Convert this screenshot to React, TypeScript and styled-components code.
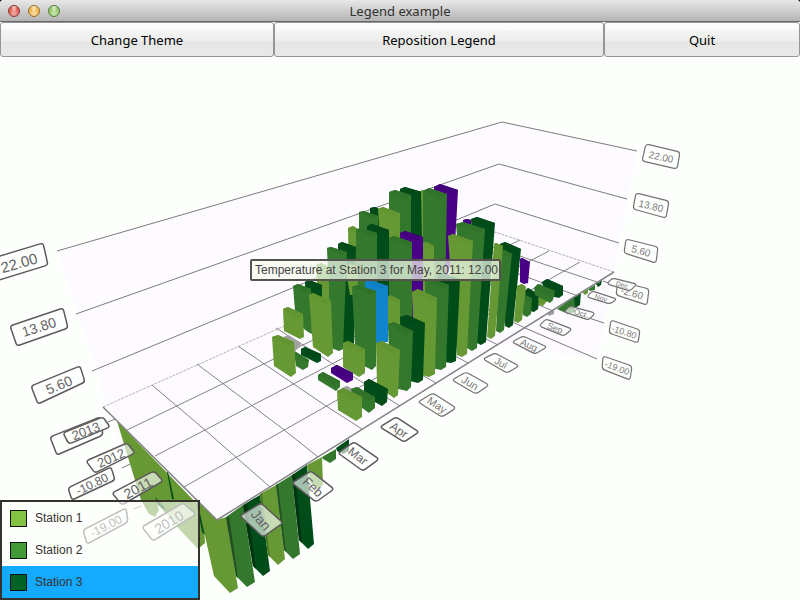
import React from "react";
import styled, { createGlobalStyle } from "styled-components";

const GlobalStyle = createGlobalStyle`
  * { box-sizing: border-box; }
  body {
    margin: 0;
    background: #fcfffc;
    font-family: "Noto Sans", "Open Sans", sans-serif;
  }
`;

const Window = styled.div`
  display: flex;
  flex-direction: column;
  min-height: 100vh;
  background: #fcfffc;
`;

const TitleBar = styled.header`
  display: grid;
  grid-template-columns: 1fr auto 1fr;
  align-items: center;
  height: 22px;
  padding: 0 8px;
  background: linear-gradient(#e8e8e8, #b4b4b4);
  border-bottom: 1px solid #686868;
  border-radius: 4px 4px 0 0;
  box-shadow: 0 -4px 0 4px #222;
  clip-path: inset(0);
`;

const Title = styled.h1`
  margin: 0;
  font-size: 13px;
  line-height: 20px;
  font-weight: 400;
  color: #303030;
`;

const Lights = styled.div`
  display: flex;
  gap: 8px;
`;

const Light = styled.button<{ $core: string; $rim: string }>`
  width: 12px;
  height: 12px;
  padding: 0;
  border: 1px solid ${(p) => p.$rim};
  border-radius: 50%;
  background: radial-gradient(ellipse at 50% 10%, #ffffffcc 0, #ffffff00 45%),
    radial-gradient(circle at 50% 75%, #ffffff88, #ffffff00 60%), ${(p) => p.$core};
`;

const Toolbar = styled.nav`
  display: grid;
  grid-template-columns: 274fr 330fr 196fr;
  height: 35px;
`;

const ToolButton = styled.button`
  padding: 0;
  border: 1px solid #959595;
  border-radius: 3px;
  background: linear-gradient(#fffdff 0, #faf8fc 22%, #f3f5f1 24%, #ededed 55%, #e5e7e4 58%, #e9e9e9 100%);
  font-family: "Noto Sans", "Open Sans", sans-serif;
  font-size: 13px;
  line-height: 18px;
  color: #000;
`;

const ChartArea = styled.main`
  position: relative;
  display: flex;
  flex: 1;
  overflow: hidden;
`;

const Chart = styled.svg`
  display: block;
  flex: 1;
  min-width: 0;
  font-family: "Liberation Sans", Arial, sans-serif;
`;

const Legend = styled.ul`
  position: absolute;
  left: 0;
  bottom: 0;
  width: 200px;
  margin: 0;
  padding: 0;
  list-style: none;
  border: 2px solid #35312d;
  background: rgba(253, 255, 252, 0.6);
`;

const LegendItem = styled.li<{ $selected?: boolean }>`
  display: flex;
  align-items: center;
  gap: 8px;
  height: 32px;
  padding-left: 8px;
  background: ${(p) => (p.$selected ? "#14aaff" : "transparent")};
  font-family: "Liberation Sans", Arial, sans-serif;
  font-size: 12px;
  color: #35322f;
`;

const Swatch = styled.span<{ $color: string }>`
  width: 17px;
  height: 17px;
  border: 1px solid #111;
  background: ${(p) => p.$color};
`;

type Kind = "light" | "mid" | "dark" | "select" | "point" | "shade";
type Shape = [Kind, string];

const fills: Record<Kind, string> = {
  light: "#669933",
  mid: "#33782c",
  dark: "#004d1a",
  select: "#490087",
  point: "#1085cc",
  shade: "#a2a0a2",
};
const caps: Record<Kind, string> = {
  light: "#629531",
  mid: "#30722a",
  dark: "#004919",
  select: "#43007d",
  point: "#0f80c4",
  shade: "#a2a0a2",
};

const below: Shape[] = [
  ["light", "117,421 141,500 149,514 155,517 159,510 157,503 181,531 198,549 205,543 203,510"],
  ["dark", "155,497 164,507 166,511 158,505"],
  ["dark", "167,472 168,472 174,499 172,499"],
  ["dark", "196,500 201,506 206,536 202,532"],
  ["light", "197,500 217,520 226,517 238,588 230,593 214,576"],
  ["mid", "226,517 243,505 255,582 247,587 236,576"],
  ["dark", "243,505 260,495 270,571 263,576 253,566"],
  ["light", "260,494 276,485 285,559 278,565 268,555"],
  ["mid", "276,485 292,475 300,554 293,559 284,550"],
  ["dark", "292,475 307,465 314,544 308,549 299,540"],
  ["light", "307,465 322,457 323,485 317,489 310,482"],
  ["mid", "322,457 336,449 336,459 330,463 323,459"],
  ["dark", "336,448 349,439 349,451 343,454 337,451"],
  ["shade", "547,313 554,309 554,314 549,316"],
  ["mid", "557,309 575,296 575,312 568,314"],
  ["dark", "574,297 581,292 580,305 575,308"],
  ["light", "582,292 588,289 588,293 585,295"],
  ["mid", "588,289 595,285 595,290 590,291"],
  ["dark", "596,284 602,280 601,285 598,287"],
];

const sides = [
  ["#234f20", "226,518 229,516 238,578 236,576"],
  ["#003411", "243,506 247,504 256,569 253,566"],
  ["#4b7427", "260,495 262,493 270,557 268,555"],
  ["#245420", "276,485 278,484 286,552 284,550"],
  ["#003411", "292,475 295,474 302,543 299,540"],
];

// Each bar lists its left, ridge and right roof corners first, then its foot.
const bars: Shape[] = [
  ["dark", "400,189 405,187 422,192 422,240 400,240"],
  ["mid", "389,192 395,190 411,195 411,240 389,240"],
  ["light", "421,191 422,190 424,191 424,240 422,240"],
  ["select", "434,187 440,184 458,190 455,245 444,290 434,290"],
  ["mid", "423,191 429,188 447,194 445,300 423,300"],
  ["dark", "370,208 375,207 379,209 379,230 370,230"],
  ["mid", "359,212 364,211 378,216 378,232 359,232"],
  ["light", "378,209 383,207 400,213 400,240 380,240"],
  ["select", "463,220 467,219 471,220 471,228 463,228"],
  ["dark", "471,219 477,217 495,223 486,342 481,345 477,343"],
  ["mid", "456,224 463,222 485,229 477,348 472,351 467,348"],
  ["light", "448,236 453,234 473,241 467,354 462,357 457,355"],
  ["select", "520,259 522,258 530,262 528,283 524,284 520,282"],
  ["dark", "500,244 505,242 521,249 513,325 509,328 505,326"],
  ["mid", "500,252 504,250 512,254 504,330 500,333 496,331"],
  ["light", "494,244 496,243 503,246 495,336 491,339 487,337"],
  ["light", "423,243 427,242 434,246 434,300 423,300"],
  ["select", "400,233 405,231 423,237 423,295 413,340 400,340"],
  ["mid", "389,238 394,236 412,242 412,340 389,340"],
  ["light", "348,228 353,226 358,229 358,280 349,280"],
  ["dark", "367,226 372,224 389,230 389,300 367,300"],
  ["mid", "356,230 360,228 377,233 377,295 356,295"],
  ["dark", "338,244 342,242 356,247 354,348 350,351 338,345"],
  ["mid", "327,248 331,247 347,252 343,349 339,351 331,348"],
  ["light", "316,265 321,263 329,267 329,300 318,300"],
  ["light", "345,266 350,264 358,267 358,295 350,295"],
  ["dark", "305,282 309,280 322,285 322,330 306,325"],
  ["mid", "293,286 298,284 311,289 312,334 308,332 296,323"],
  ["light", "283,309 288,307 303,314 304,337 300,339 284,331"],
  ["light", "309,295 313,293 331,301 333,353 328,357 313,347"],
  ["light", "388,297 390,295 400,300 400,330 388,330"],
  ["point", "365,282 370,280 388,286 388,342 382,342 366,345"],
  ["mid", "352,287 357,285 376,291 376,366 372,370 356,362"],
  ["dark", "437,276 442,273 460,279 456,361 451,363 438,361"],
  ["mid", "425,280 430,278 449,285 446,367 441,370 427,367"],
  ["light", "412,292 418,289 437,298 435,374 429,377 415,373"],
  ["dark", "400,317 407,315 425,323 423,380 418,383 402,379"],
  ["mid", "388,324 394,322 413,331 411,387 407,391 390,387"],
  ["light", "376,343 382,341 400,350 398,395 394,398 377,386"],
  ["dark", "525,291 528,288 540,295 538,309 534,312 526,310"],
  ["mid", "522,297 525,295 532,298 531,314 527,317 523,315"],
  ["light", "517,286 522,284 526,287 522,320 518,323 514,321"],
  ["light", "538,298 542,297 547,301 543,306 539,305"],
  ["dark", "542,282 547,279 563,286 563,295 559,298 545,295"],
  ["mid", "534,288 538,284 555,291 553,300 550,303 535,295"],
  ["shade", "284,337 288,335 301,343 300,347 296,350 294,360"],
  ["mid", "294,353 296,352 309,360 308,367 303,370 296,366"],
  ["dark", "301,349 305,347 321,354 321,361 317,363 301,355"],
  ["light", "272,337 278,335 294,342 296,373 291,377 274,366"],
  ["light", "343,343 348,341 365,349 365,373 359,377 343,367"],
  ["select", "331,368 337,365 353,373 353,380 347,383 331,373"],
  ["mid", "318,375 323,372 340,381 340,387 336,391 318,380"],
  ["shade", "342,388 347,386 354,390 354,394 346,394"],
  ["dark", "364,382 369,379 388,389 387,402 382,406 364,396"],
  ["mid", "351,389 357,387 375,397 375,408 369,413 354,402"],
  ["light", "337,391 343,388 362,397 362,417 356,421 338,410"],
];

const wallLines = [
  "57,251 502,122 637,151",
  "76,314 499,164 627,199",
  "92,371 495,204 619,243",
  "108,422 115,419",
  "122,468 130,464",
  "134,509 141,506",
  "603,281 611,284",
  "580,315 604,323",
  "525,328 597,359",
];

const floorLines = [
  "127,430 520,240",
  "155,456 549,251",
  "184,487 580,262",
  "152,385 205,430 270,487",
  "197,364 283,429 318,457",
  "238,346 326,406 362,429",
  "276,328 400,406",
  "312,312 436,383",
  "345,297 468,363",
  "376,283 498,345",
  "406,270 525,328",
  "431,260 553,311",
  "454,250 578,296",
  "475,241 600,283",
];

type Tag = {
  text: string;
  quad: string;
  x: number;
  y: number;
  angle: number;
  size: number;
  opacity: number;
};
const tag = (
  text: string,
  quad: string,
  x: number,
  y: number,
  angle: number,
  size: number,
  opacity = 0.65,
): Tag => ({ text, quad, x, y, angle, size, opacity });

const tags: Tag[] = [
  tag("22.00", "-20,262 43,243 48,265 -14,284", 19, 263, -16, 15),
  tag("13.80", "10,326 63,308 68,328 17,346", 39, 327, -18, 14),
  tag("5.60", "31,386 80,366 85,382 38,404", 59, 385, -22, 14),
  tag("-2.60", "50,437 100,417 103,435 57,455", 79, 435, -22, 13),
  tag("2013", "63,433 103,417 110,427 69,444", 86, 431, -21, 13, 0.95),
  tag("-10.80", "68,488 111,467 115,480 72,500", 92, 484, -26, 12),
  tag("2012", "86,461 127,443 135,453 95,473", 111, 458, -24, 13),
  tag("2011", "112,493 154,471 163,481 122,505", 138, 488, -28, 14),
  tag("-19.00", "83,530 126,508 128,522 87,544", 106, 526, -27, 12),
  tag("2010", "142,527 183,503 196,514 153,541", 169, 522, -31, 14),
  tag("22.00", "646,144 680,152 677,169 642,161", 661, 157, 12, 10),
  tag("13.80", "636,193 669,201 666,218 633,209", 651, 206, 13, 10),
  tag("5.60", "626,239 658,247 656,263 624,253", 641, 251, 15, 10),
  tag("-2.60", "618,281 649,289 647,305 616,295", 632, 293, 16, 10),
  tag("-10.80", "611,320 640,330 638,343 609,333", 624, 332, 18, 9),
  tag("-19.00", "603,356 632,366 630,380 602,369", 617, 368, 20, 9),
  tag("Dec", "607,284 612,278 637,284 630,291", 622, 285, 15, 7, 0.9),
  tag("Nov", "587,297 592,291 617,299 610,304", 601, 298, 17, 7),
  tag("Oct", "564,312 570,306 595,313 589,320", 580, 313, 18, 8),
  tag("Sep", "539,326 546,319 572,329 564,336", 555, 328, 21, 9),
  tag("Aug", "512,342 523,336 547,347 535,354", 529, 345, 25, 10),
  tag("Jul", "483,359 495,353 519,366 507,373", 501, 363, 28, 10),
  tag("Jun", "452,380 466,372 489,385 476,394", 470, 383, 31, 11),
  tag("May", "418,402 433,393 456,408 442,417", 437, 405, 33, 11),
  tag("Apr", "380,427 396,417 419,432 404,442", 399, 430, 35, 12),
  tag("Mar", "338,453 354,442 379,459 363,471", 358, 456, 38, 12),
  tag("Feb", "292,483 311,471 334,489 316,502", 313, 487, 43, 13),
  tag("Jan", "240,516 261,503 283,523 263,537", 261, 520, 49, 14),
];

// Rounds the corners of a label frame by cutting each with a quadratic curve.
function roundedPath(quad: string): string {
  const pts = quad.split(" ").map((p) => p.split(",").map(Number));
  const toward = (a: number[], b: number[]) => {
    const len = Math.hypot(b[0] - a[0], b[1] - a[1]);
    const t = Math.min(3 / len, 0.4);
    return `${a[0] + (b[0] - a[0]) * t} ${a[1] + (b[1] - a[1]) * t}`;
  };
  return (
    pts
      .map((p, i) => {
        const prev = pts[(i + 3) % 4];
        const next = pts[(i + 1) % 4];
        return `${i ? "L" : "M"}${toward(p, prev)} Q${p[0]} ${p[1]} ${toward(p, next)}`;
      })
      .join(" ") + "Z"
  );
}

function Bar({ kind, points }: { kind: Kind; points: string }) {
  const [a, b, c] = points.split(" ").map((p) => p.split(",").map(Number));
  const front = [a[0] + c[0] - b[0], a[1] + c[1] - b[1] + 2];
  return (
    <g>
      <polygon points={points} fill={fills[kind]} />
      <polygon points={`${a} ${b} ${c} ${front}`} fill={caps[kind]} />
    </g>
  );
}

function AxisTag({ text, quad, x, y, angle, size, opacity }: Tag) {
  const near = size > 11;
  return (
    <g>
      <path
        d={roundedPath(quad)}
        fill="#fcfffc"
        fillOpacity={opacity}
        stroke={near ? "#5d5a5b" : "#757274"}
        strokeWidth={near ? 1.5 : 1.2}
      />
      <text
        transform={`rotate(${angle} ${x} ${y})`}
        x={x}
        y={y}
        dy="0.35em"
        textAnchor="middle"
        fontSize={size}
        fill={near ? "#666365" : "#7c797b"}
      >
        {text}
      </text>
    </g>
  );
}

const stations = [
  { name: "Station 1", color: "#84c341" },
  { name: "Station 2", color: "#429a36" },
  { name: "Station 3", color: "#006325", selected: true },
];

export default function App() {
  return (
    <>
      <GlobalStyle />
      <Window>
        <TitleBar>
          <Lights>
            <Light aria-label="Close" $core="#e0584f" $rim="#8f3b35" />
            <Light aria-label="Minimize" $core="#eeb54a" $rim="#957032" />
            <Light aria-label="Zoom" $core="#92c763" $rim="#587b42" />
          </Lights>
          <Title>Legend example</Title>
        </TitleBar>
        <Toolbar>
          <ToolButton>Change Theme</ToolButton>
          <ToolButton>Reposition Legend</ToolButton>
          <ToolButton>Quit</ToolButton>
        </Toolbar>
        <ChartArea>
          <Chart viewBox="0 57 800 543" role="img" aria-label="Temperature by station, month and year">
            <polygon points="57,251 502,122 637,151 597,359 500,345 217,520 141,506" fill="#fdfbff" />
            <g fill="none" stroke="#7d7b7d">
              {wallLines.map((p) => (
                <polyline key={p} points={p} />
              ))}
            </g>
            {below.map(([kind, points]) => (
              <polygon key={points} points={points} fill={fills[kind]} />
            ))}
            {sides.map(([fill, points]) => (
              <polygon key={points} points={points} fill={fill} />
            ))}
            <polygon points="103,407 495,232 614,272 217,520" fill="#fdfbff" />
            <polyline points="103,407 495,232 614,272" fill="none" stroke="#b5b3b5" strokeDasharray="3 1" />
            <g fill="none" stroke="#858385">
              {floorLines.map((p) => (
                <polyline key={p} points={p} />
              ))}
            </g>
            <polyline points="103,407 217,520 614,272" fill="none" stroke="#858385" strokeWidth={1.5} />
            {bars.map(([kind, points]) => (
              <Bar key={points} kind={kind} points={points} />
            ))}
            {tags.map((t) => (
              <AxisTag key={t.quad} {...t} />
            ))}
            <g>
              <rect x={251} y={260} width={249} height={20} rx={1} fill="#f4fbf0" fillOpacity={0.72} stroke="#56534f" strokeWidth={2} />
              <text x={255} y={274} fontSize={12} fill="#45423f">
                Temperature at Station 3 for May, 2011: 12.00
              </text>
            </g>
          </Chart>
          <Legend>
            {stations.map((s) => (
              <LegendItem key={s.name} $selected={s.selected}>
                <Swatch $color={s.color} />
                {s.name}
              </LegendItem>
            ))}
          </Legend>
        </ChartArea>
      </Window>
    </>
  );
}
